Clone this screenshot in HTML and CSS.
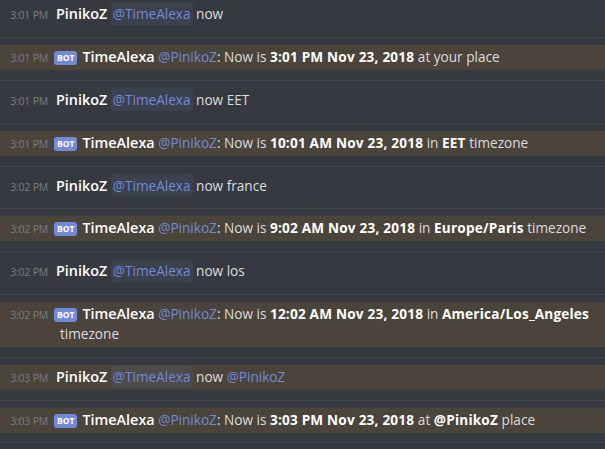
FILE: index.html
```html
<!DOCTYPE html>
<html>
<head>
<meta charset="utf-8">
<link rel="stylesheet" href="styles.css">
</head>
<body>
<div class="chat">
  <div class="group">
    <div class="msg"><span class="time">3:01 PM</span><span class="user">PinikoZ</span> <span class="mention">@TimeAlexa</span> now</div>
  </div>
  <div class="group hl">
    <div class="msg"><span class="time">3:01 PM</span><span class="tag">BOT</span><span class="user">TimeAlexa</span> <span class="ping">@PinikoZ</span>: Now is <b>3:01 PM Nov 23, 2018</b> at your place</div>
  </div>
  <div class="group">
    <div class="msg"><span class="time">3:01 PM</span><span class="user">PinikoZ</span> <span class="mention">@TimeAlexa</span> now EET</div>
  </div>
  <div class="group hl">
    <div class="msg"><span class="time">3:01 PM</span><span class="tag">BOT</span><span class="user">TimeAlexa</span> <span class="ping">@PinikoZ</span>: Now is <b>10:01 AM Nov 23, 2018</b> in <b>EET</b> timezone</div>
  </div>
  <div class="group">
    <div class="msg"><span class="time">3:02 PM</span><span class="user">PinikoZ</span> <span class="mention">@TimeAlexa</span> now france</div>
  </div>
  <div class="group hl">
    <div class="msg"><span class="time">3:02 PM</span><span class="tag">BOT</span><span class="user">TimeAlexa</span> <span class="ping">@PinikoZ</span>: Now is <b>9:02 AM Nov 23, 2018</b> in <b>Europe/Paris</b> timezone</div>
  </div>
  <div class="group">
    <div class="msg"><span class="time">3:02 PM</span><span class="user">PinikoZ</span> <span class="mention">@TimeAlexa</span> now los</div>
  </div>
  <div class="group hl">
    <div class="msg"><span class="time">3:02 PM</span><span class="tag">BOT</span><span class="user">TimeAlexa</span> <span class="ping">@PinikoZ</span>: Now is <b>12:02 AM Nov 23, 2018</b> in <b>America/Los_Angeles</b> timezone</div>
  </div>
  <div class="group hl">
    <div class="msg"><span class="time">3:03 PM</span><span class="user">PinikoZ</span> <span class="mention">@TimeAlexa</span> now <span class="ping">@PinikoZ</span></div>
  </div>
  <div class="group hl">
    <div class="msg"><span class="time">3:03 PM</span><span class="tag">BOT</span><span class="user">TimeAlexa</span> <span class="ping">@PinikoZ</span>: Now is <b>3:03 PM Nov 23, 2018</b> at <b>@PinikoZ</b> place</div>
  </div>
  <div class="group"></div>
</div>
</body>
</html>
```

FILE: styles.css
```css
html, body {
  margin: 0;
  padding: 0;
  background: #36393f;
}
body {
  font-family: "Open Sans", "Noto Sans", sans-serif;
  color: #dcddde;
  font-size: 13.6px;
  overflow: hidden;
  height: 449px;
}
.chat {
  display: flex;
  flex-direction: column;
}
.group {
  border-top: 1px solid #40444b;
  padding: 7px 0 9.8px;
}
.group:first-child {
  border-top: 0;
  padding-top: 2.33px;
}
.msg {
  padding: 2px 0 3px 60px;
  text-indent: -60px;
  line-height: 20px;
}
.hl .msg {
  background: #4a443b;
}
.time {
  display: inline-block;
  text-indent: 0;
  width: 48px;
  margin-right: 8px;
  text-align: right;
  font-size: 10.5px;
  line-height: 12px;
  color: #7a7d83;
  letter-spacing: -0.2px;
}
.user {
  color: #ffffff;
  font-size: 14.4px;
  font-weight: 600;
  line-height: 14px;
}
.tag {
  display: inline-block;
  text-indent: 0;
  background: #7289da;
  color: #fff;
  font-size: 8.5px;
  font-weight: 700;
  line-height: 14px;
  padding: 0 3px;
  border-radius: 3px;
  margin: 0 5px 0 -2px;
  vertical-align: 1px;
}
.mention {
  color: #7289da;
  background: rgba(114, 137, 218, 0.1);
  border-radius: 3px;
  padding: 2px 2px;
}
.ping {
  color: #7289da;
}
b {
  color: #ffffff;
  font-weight: 700;
  letter-spacing: 0.2px;
}
```
